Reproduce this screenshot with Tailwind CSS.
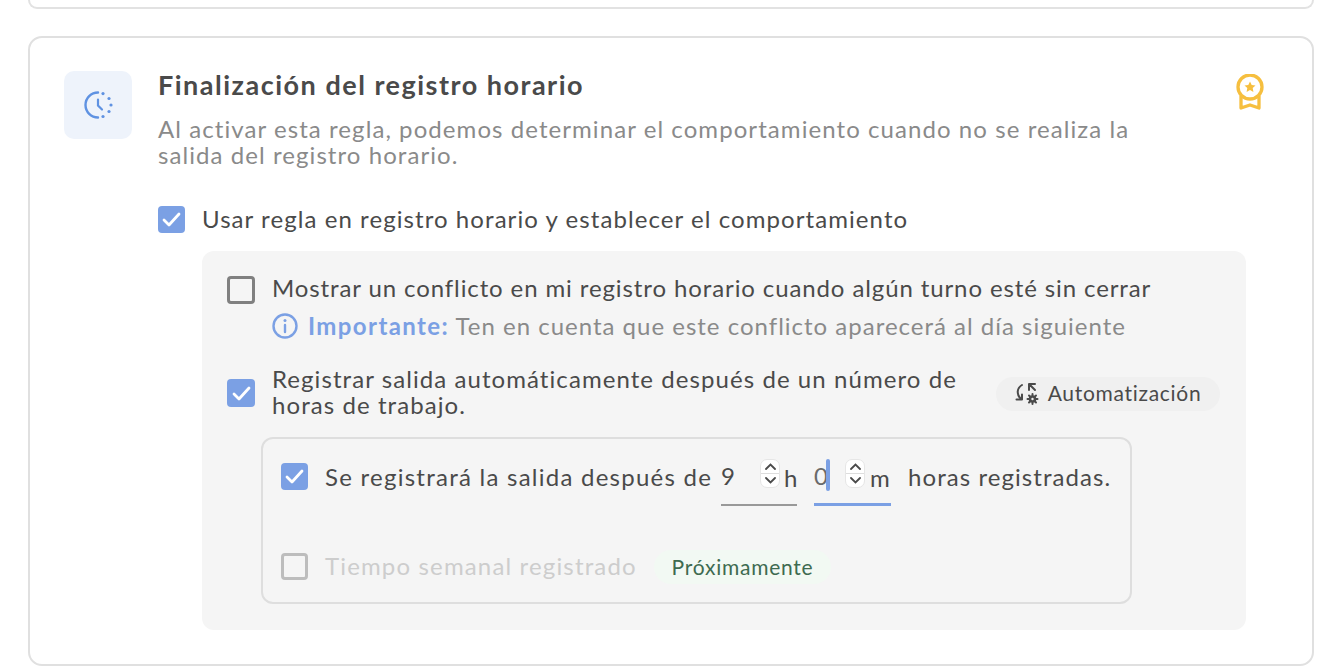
<!DOCTYPE html>
<html lang="es"><head><meta charset="utf-8"><script src="https://cdn.jsdelivr.net/npm/@tailwindcss/browser@4"></script></head>
<body class="bg-white">
<div class="w-[1332px] h-[670px] overflow-hidden pl-[28px] pr-[18px] font-['Lato','Noto_Sans',sans-serif] text-[#4a4a4a] tracking-[1.07px]">
  <div class="h-[9px] border-2 border-t-0 border-[#e2e2e2] rounded-b-[14px]"></div>
  <div class="mt-[27px] h-[630px] border-2 border-[#e0e0e0] rounded-[14px] flex pl-[34px] pt-[33px] pr-[50px]">
    <div class="w-[68px] h-[68px] rounded-[10px] bg-[#eef3fb] flex items-center justify-center shrink-0">
      <svg width="30" height="30" viewBox="0 0 30 30" fill="none" stroke="#5f92e2" stroke-width="2.4" stroke-linecap="round"><path d="M15 2.500a12.500 12.500 0 0 0 0 25"/><path d="M15 9.500v6l4 4" stroke-width="2.200"/><g fill="#5f92e2" stroke="none"><circle cx="20" cy="3.600" r="1.600"/><circle cx="26" cy="8.500" r="1.600"/><circle cx="28" cy="15" r="1.600"/><circle cx="26" cy="21.500" r="1.600"/><circle cx="20" cy="26.500" r="1.600"/></g></svg>
    </div>
    <div class="ml-[26px] flex-1 min-w-0">
      <div class="flex justify-between">
        <div>
          <h2 class="text-[27px] leading-[32px] font-bold text-[#4a4a4a] -mt-[2px] tracking-[1.5px]">Finalización del registro horario</h2>
          <p class="mt-[15px] text-[24px] leading-[26px] text-[#8a8a8a] w-[1040px]">Al activar esta regla, podemos determinar el comportamiento cuando no se realiza la<br>salida del registro horario.</p>
        </div>
        <svg class="-mr-[2px] mt-[3px]" width="28" height="36" viewBox="0 0 28 36" fill="none" stroke="#f6bf3f" stroke-width="3.300"><circle cx="14" cy="13" r="12"/><path d="M5 22v12l9-3 9 3V22" stroke-linejoin="round"/><path d="M14 7.500l1.700 3.500 3.800.5-2.800 2.600.7 3.800-3.400-1.800-3.400 1.800.7-3.800-2.800-2.600 3.800-.5z" fill="#f6bf3f" stroke="none"/></svg>
      </div>
      <label class="flex items-center gap-[17px] mt-[37px] text-[24px] leading-[28px]">
        <span class="w-[27px] h-[27px] rounded-[4px] bg-[#7ba0e4] flex items-center justify-center shrink-0"><svg width="19" height="15" viewBox="0 0 19 15" fill="none" stroke="#fff" stroke-width="2.800" stroke-linecap="round" stroke-linejoin="round"><path d="M2 8l5 5L17 2"/></svg></span>
        <span>Usar regla en registro horario y establecer el comportamiento</span>
      </label>
      <div class="ml-[44px] mt-[18px] w-[1044px] h-[379px] bg-[#f5f5f5] rounded-[12px] pl-[25px] pr-[26px] pt-[25px] text-[24px]">
        <div class="flex gap-[17px]">
          <span class="w-[28px] h-[28px] rounded-[4px] border-[3px] border-[#808080] shrink-0"></span>
          <div class="-translate-y-px">
            <div class="leading-[26px] tracking-[0.89px]">Mostrar un conflicto en mi registro horario cuando algún turno esté sin cerrar</div>
            <div class="mt-[12px] leading-[26px] flex items-center gap-[10px] text-[#8a8a8a]">
              <svg width="26" height="26" viewBox="0 0 26 26" fill="none" stroke="#7ba0e4" stroke-width="2.400" stroke-linecap="round"><circle cx="13" cy="13" r="11.500"/><path d="M13 12v7"/><circle cx="13" cy="7.500" r="1.500" fill="#7ba0e4" stroke="none"/></svg>
              <span class="tracking-[1px]"><b class="text-[#7ba0e4] font-bold tracking-[1.4px]">Importante:</b> Ten en cuenta que este conflicto aparecerá al día siguiente</span>
            </div>
          </div>
        </div>
        <div class="mt-[27px] flex items-center">
          <span class="w-[28px] h-[28px] rounded-[4px] bg-[#7ba0e4] flex items-center justify-center shrink-0"><svg width="19" height="15" viewBox="0 0 19 15" fill="none" stroke="#fff" stroke-width="2.800" stroke-linecap="round" stroke-linejoin="round"><path d="M2 8l5 5L17 2"/></svg></span>
          <div class="ml-[17px] w-[724px] leading-[26px] whitespace-nowrap -translate-y-px">Registrar salida automáticamente después de un número de<br>horas de trabajo.</div>
          <span class="w-[224px] h-[34px] rounded-full bg-[#f0f0f0] flex items-center justify-center gap-[9px] text-[21px] tracking-[0.7px] leading-none shrink-0 translate-y-px">
            <svg width="24" height="24" viewBox="0 0 24 24" fill="none" stroke="#4a4a4a" stroke-width="2" stroke-linecap="round" stroke-linejoin="round"><path d="M7 3C2 6 1 12 6 17"/><path d="M1.500 17.500H7V12.500"/><path d="M14 2h6M14 2v6M14 2l6 6"/><circle cx="17.500" cy="17" r="2.500" stroke-width="2.600"/><path d="M17.500 12v1.500M17.500 20.500V22M12.500 17H14M21 17h1.500M14 13.500l1 1M20 19.500l1 1M21 13.500l-1 1M15 19.500l-1 1" stroke-width="2"/></svg>
            <span class="-translate-y-[2px]">Automatización</span>
          </span>
        </div>
        <div class="ml-[34px] mt-[18px] w-[871px] h-[167px] border-2 border-[#dedede] rounded-[12px] pl-[18px] pt-[24px]">
          <div class="flex items-start h-[45px]">
            <span class="w-[27px] h-[27px] rounded-[4px] bg-[#7ba0e4] flex items-center justify-center shrink-0"><svg width="19" height="15" viewBox="0 0 19 15" fill="none" stroke="#fff" stroke-width="2.800" stroke-linecap="round" stroke-linejoin="round"><path d="M2 8l5 5L17 2"/></svg></span>
            <span class="ml-[17px] leading-[28px] w-[396px] whitespace-nowrap tracking-[1.25px]">Se registrará la salida después de</span>
            <div class="relative w-[76px] h-[44px] border-b-2 border-[#999] leading-[28px] -mt-[1px]">9
              <span class="absolute left-[39px] top-[-3px] w-[20px] h-[29px] rounded-[7px] bg-white border border-[#e6e6e6] flex flex-col items-center justify-center gap-[3px]"><svg width="11" height="7" viewBox="0 0 11 7" fill="none" stroke="#4a4a4a" stroke-width="1.800" stroke-linecap="round"><path d="M1 6l4.500-4.500L10 6"/></svg><span class="w-full h-px bg-[#dddddd]"></span><svg width="11" height="7" viewBox="0 0 11 7" fill="none" stroke="#4a4a4a" stroke-width="1.800" stroke-linecap="round"><path d="M1 1l4.500 4.500L10 1"/></svg></span>
              <span class="absolute left-[63px] top-[2px] leading-[28px]">h</span>
            </div>
            <div class="relative ml-[17px] w-[77px] h-[44px] border-b-[3px] border-[#7ba0e4] leading-[28px] -mt-[1px] text-[#6a6a6a]">0
              <span class="absolute left-[12px] top-[-3px] w-[4px] h-[32px] rounded-[2px] bg-[#7ba0e4]"></span>
              <span class="absolute left-[31px] top-[-3px] w-[20px] h-[29px] rounded-[7px] bg-white border border-[#e6e6e6] flex flex-col items-center justify-center gap-[3px]"><svg width="11" height="7" viewBox="0 0 11 7" fill="none" stroke="#4a4a4a" stroke-width="1.800" stroke-linecap="round"><path d="M1 6l4.500-4.500L10 6"/></svg><span class="w-full h-px bg-[#dddddd]"></span><svg width="11" height="7" viewBox="0 0 11 7" fill="none" stroke="#4a4a4a" stroke-width="1.800" stroke-linecap="round"><path d="M1 1l4.500 4.500L10 1"/></svg></span>
              <span class="absolute left-[56px] top-[2px] leading-[28px] text-[#4a4a4a]">m</span>
            </div>
            <span class="ml-[17px] leading-[28px] whitespace-nowrap">horas registradas.</span>
          </div>
          <div class="mt-[41px] flex items-center">
            <span class="w-[27px] h-[27px] rounded-[4px] border-[3px] border-[#bdbdbd] shrink-0"></span>
            <span class="ml-[17px] text-[#cdcdcd] leading-[28px] w-[329px] whitespace-nowrap tracking-[1.15px]">Tiempo semanal registrado</span>
            <span class="w-[177px] h-[34px] rounded-full bg-[#f2f9f3] text-[#3e6b50] text-[21px] tracking-[0.75px] flex items-center justify-center translate-y-px">Próximamente</span>
          </div>
        </div>
      </div>
    </div>
  </div>
</div>
</body></html>
